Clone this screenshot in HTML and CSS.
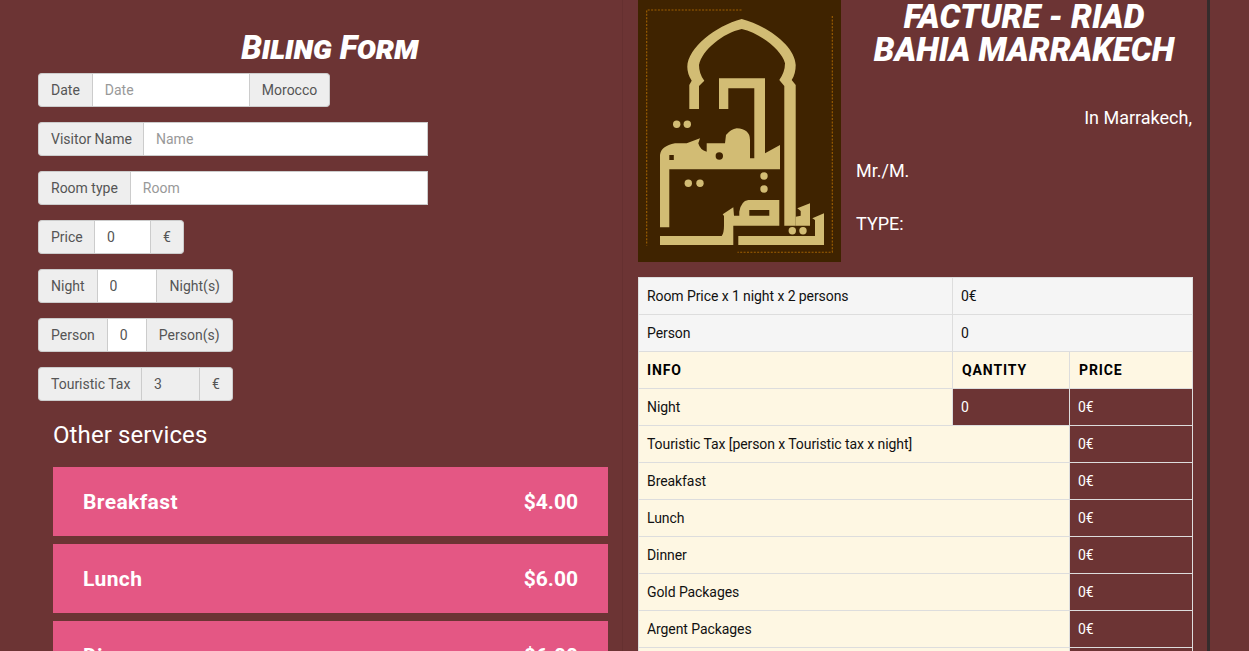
FILE: index.html
```html
<!DOCTYPE html>
<html lang="en">
<head>
    <meta charset="UTF-8">
    <meta name="viewport" content="width=device-width, initial-scale=1.0">
    <title>Facture - Riad Bahia Marrakech</title>
    <link rel="stylesheet" href="styles.css">
</head>
<body>
    <div class="page">

        <div class="form-side">
            <h2 class="form-title">Biling Form</h2>

            <div class="input-group">
                <span class="addon">Date</span>
                <input class="field w-date" type="text" placeholder="Date">
                <span class="addon">Morocco</span>
            </div>
            <div class="input-group">
                <span class="addon a-name">Visitor Name</span>
                <input class="field w-name" type="text" placeholder="Name">
            </div>
            <div class="input-group">
                <span class="addon">Room type</span>
                <input class="field w-room" type="text" placeholder="Room">
            </div>
            <div class="input-group">
                <span class="addon a-price">Price</span>
                <input class="field w-price" type="text" value="0">
                <span class="addon">€</span>
            </div>
            <div class="input-group">
                <span class="addon">Night</span>
                <input class="field w-night" type="text" value="0">
                <span class="addon a-nights">Night(s)</span>
            </div>
            <div class="input-group">
                <span class="addon">Person</span>
                <input class="field w-person" type="text" value="0">
                <span class="addon">Person(s)</span>
            </div>
            <div class="input-group">
                <span class="addon a-tax">Touristic Tax</span>
                <input class="field w-tax" type="text" value="3" disabled>
                <span class="addon">€</span>
            </div>

            <div class="services">
                <h3 class="services-title">Other services</h3>
                <div class="service"><span class="service-name">Breakfast</span><span>$4.00</span></div>
                <div class="service"><span class="service-name">Lunch</span><span>$6.00</span></div>
                <div class="service"><span class="service-name">Dinner</span><span>$6.00</span></div>
            </div>
        </div>

        <div class="bill-side">
            <div class="bill-head">
                <svg class="logo" viewBox="638 0 203 262" aria-label="Riad Bahia logo">
                    <rect x="638" y="0" width="203" height="262" fill="#3f2300"/>
                    <g fill="none" stroke="#a06000" stroke-width="1.1" stroke-dasharray="2 1.4">
                        <path d="M741.5 10H646.7V245.5"/>
                        <path d="M832.3 16V252.3H737.5"/>
                    </g>
                    <g fill="#d2bc74">
                        <!-- arch -->
                        <path d="M689.3 109V85L691.7 80.7Q687.3 74 687.3 66.7C688 48 715 26 741.7 19C768 26 795 46 795.7 65Q795.7 74 791.7 80L795.7 85V225.7H784.3V86L779.3 80Q785 72 785 63.3C782 50 760 33 741.7 29C723 33 702 50 699 65Q699 74 704.3 80.7L699 86V109Z"/>
                        <!-- upper word -->
                        <path d="M660 227.3V155Q661 146 675 143.3H686.7L700 138.3L698.3 143.3Q700 150 706.7 151.7V143.3H725L726 135Q731 129 736.7 128.3Q750 129 750 140V158.3H754.3V88.3H728.3V109H719V78.3H765V153.3L780 145V169.3H669.3V227.3Z"/>
                        <!-- lower word -->
                        <path fill-rule="evenodd" d="M660 236H721.7Q724 233 724 225.7V216L722.7 214.3L733.3 207.3L734 215.7H739.3V211.7Q741 201 748.3 200H779.3V225.7H733.3V245H660ZM749.3 210V215.7H769.3V210Z"/>
                        <path d="M795.7 216.7L800.7 215.7V211L797.3 208.3L810 203.3V225.7H795.7Z"/>
                        <path d="M738.3 236H815V220L812.3 218.3L824 213.3V245H738.3Z"/>
                        <circle cx="676.7" cy="124.3" r="3.7"/>
                        <circle cx="687.3" cy="124.3" r="3.7"/>
                        <circle cx="688.3" cy="183.3" r="3.7"/>
                        <circle cx="700" cy="183.3" r="3.7"/>
                        <circle cx="764" cy="176" r="3.7"/>
                        <circle cx="764" cy="189" r="3.7"/>
                        <circle cx="792.3" cy="230.7" r="3.7"/>
                        <circle cx="803" cy="230.7" r="3.7"/>
                    </g>
                    <circle cx="719.3" cy="156" r="3.7" fill="#3f2300"/>
                    <rect x="669.3" y="155" width="4.5" height="5" fill="#3f2300"/>
                </svg>
                <div class="bill-info">
                    <h1 class="bill-title">Facture - Riad<br>Bahia Marrakech</h1>
                    <p class="bill-place">In Marrakech,</p>
                    <p class="bill-line">Mr./M.</p>
                    <p class="bill-line">TYPE:</p>
                </div>
            </div>

            <table class="bill-table">
                <colgroup>
                    <col class="col-info">
                    <col class="col-qty">
                    <col>
                </colgroup>
                <tr class="grey">
                    <td>Room Price x 1 night x 2 persons</td>
                    <td colspan="2">0€</td>
                </tr>
                <tr class="grey">
                    <td>Person</td>
                    <td colspan="2">0</td>
                </tr>
                <tr>
                    <th>INFO</th>
                    <th>QANTITY</th>
                    <th>PRICE</th>
                </tr>
                <tr>
                    <td>Night</td>
                    <td class="dark">0</td>
                    <td class="dark">0€</td>
                </tr>
                <tr>
                    <td colspan="2">Touristic Tax [person x Touristic tax x night]</td>
                    <td class="dark">0€</td>
                </tr>
                <tr><td colspan="2">Breakfast</td><td class="dark">0€</td></tr>
                <tr><td colspan="2">Lunch</td><td class="dark">0€</td></tr>
                <tr><td colspan="2">Dinner</td><td class="dark">0€</td></tr>
                <tr><td colspan="2">Gold Packages</td><td class="dark">0€</td></tr>
                <tr><td colspan="2">Argent Packages</td><td class="dark">0€</td></tr>
                <tr><td colspan="2">&nbsp;</td><td class="dark">&nbsp;</td></tr>
            </table>
        </div>

    </div>
</body>
</html>
```

FILE: styles.css
```css
* {
    box-sizing: border-box;
}

html, body {
    height: 100%;
    margin: 0;
    overflow: hidden;
}

body {
    background-color: #6c3434;
    font-family: Roboto, "Liberation Sans", sans-serif;
    font-size: 14px;
    color: #555;
}

.page {
    display: flex;
    height: 651px;
    overflow: hidden;
}

/* left side */
.form-side {
    width: 623px;
    flex: none;
    padding: 31px 14px 0 38px;
    border-right: 1px solid #653030;
}

.form-title {
    margin: 0 0 9px;
    padding-left: 14px;
    font-size: 33px;
    line-height: 33px;
    font-weight: 900;
    font-style: italic;
    font-variant: small-caps;
    text-align: center;
    color: #fff;
}

.input-group {
    display: flex;
    width: max-content;
    height: 34px;
    margin-bottom: 15px;
}

.addon {
    display: flex;
    align-items: center;
    padding: 0 12px;
    background: #eee;
    border: 1px solid #ccc;
    line-height: 20px;
    white-space: nowrap;
}

.addon:first-child {
    border-radius: 4px 0 0 4px;
    border-right: 0;
}

.addon:last-child {
    border-radius: 0 4px 4px 0;
    border-left: 0;
}

.a-name { width: 105px; padding-right: 0; }
.a-price { width: 56px; padding-right: 0; }
.a-tax { width: 103px; padding-right: 0; }
.a-nights { padding-left: 13px; }

.field {
    height: 34px;
    padding: 6px 12px;
    border: 1px solid #ccc;
    background: #fff;
    color: #555;
    font-family: inherit;
    font-size: 14px;
    outline: none;
}

.field::placeholder {
    color: #999;
}

.field:disabled {
    background: #eee;
    opacity: 1;
}

.w-date { width: 158px; }
.w-name { width: 285px; }
.w-room { width: 298px; }
.w-price { width: 57px; }
.w-night { width: 60px; }
.w-person { width: 40px; }
.w-tax { width: 59px; }

.services {
    padding: 0 0 0 15px;
    margin-top: 19px;
}

.services-title {
    margin: 0 0 16px;
    font-size: 24px;
    line-height: 31px;
    font-weight: 400;
    letter-spacing: .1px;
    color: #fff;
}

.service {
    display: flex;
    justify-content: space-between;
    align-items: center;
    height: 69px;
    margin-bottom: 8px;
    padding: 0 30px;
    background: #e45784;
    color: #fff;
    font-size: 21px;
    font-weight: 700;
}

.service-name {
    letter-spacing: .4px;
}

/* right side */
.bill-side {
    width: 587px;
    flex: none;
    padding-left: 15px;
    padding-right: 15px;
    border-right: 3px solid #352c2c;
}

.bill-head {
    display: flex;
    height: 277px;
}

.logo {
    width: 203px;
    height: 262px;
    flex: none;
}

.bill-info {
    flex: 1;
    padding-left: 15px;
    color: #fff;
    font-size: 18px;
}

.bill-title {
    margin: 0 0 39px;
    font-size: 33px;
    line-height: 33px;
    font-weight: 900;
    font-style: italic;
    text-transform: uppercase;
    white-space: nowrap;
    text-align: center;
    color: #fff;
}

.bill-place {
    margin: 0 0 27px;
    line-height: 26px;
    text-align: right;
}

.bill-line {
    margin: 0 0 27px;
    line-height: 26px;
}

.bill-table {
    width: 555px;
    border-collapse: collapse;
    table-layout: fixed;
    background: #fef7e3;
    color: #111;
    letter-spacing: -.08px;
}

.bill-table td,
.bill-table th {
    height: 37px;
    padding: 8px;
    border: 1px solid #ddd;
    line-height: 20px;
    text-align: left;
}

.bill-table th {
    font-weight: 700;
    color: #000;
    letter-spacing: .9px;
}

.bill-table th + th {
    padding-left: 9px;
}

.col-info { width: 314px; }
.col-qty { width: 117px; }

.bill-table .grey td {
    background: #f5f5f5;
}

.bill-table .dark {
    background: #6c3434;
    color: #fff;
}
```
